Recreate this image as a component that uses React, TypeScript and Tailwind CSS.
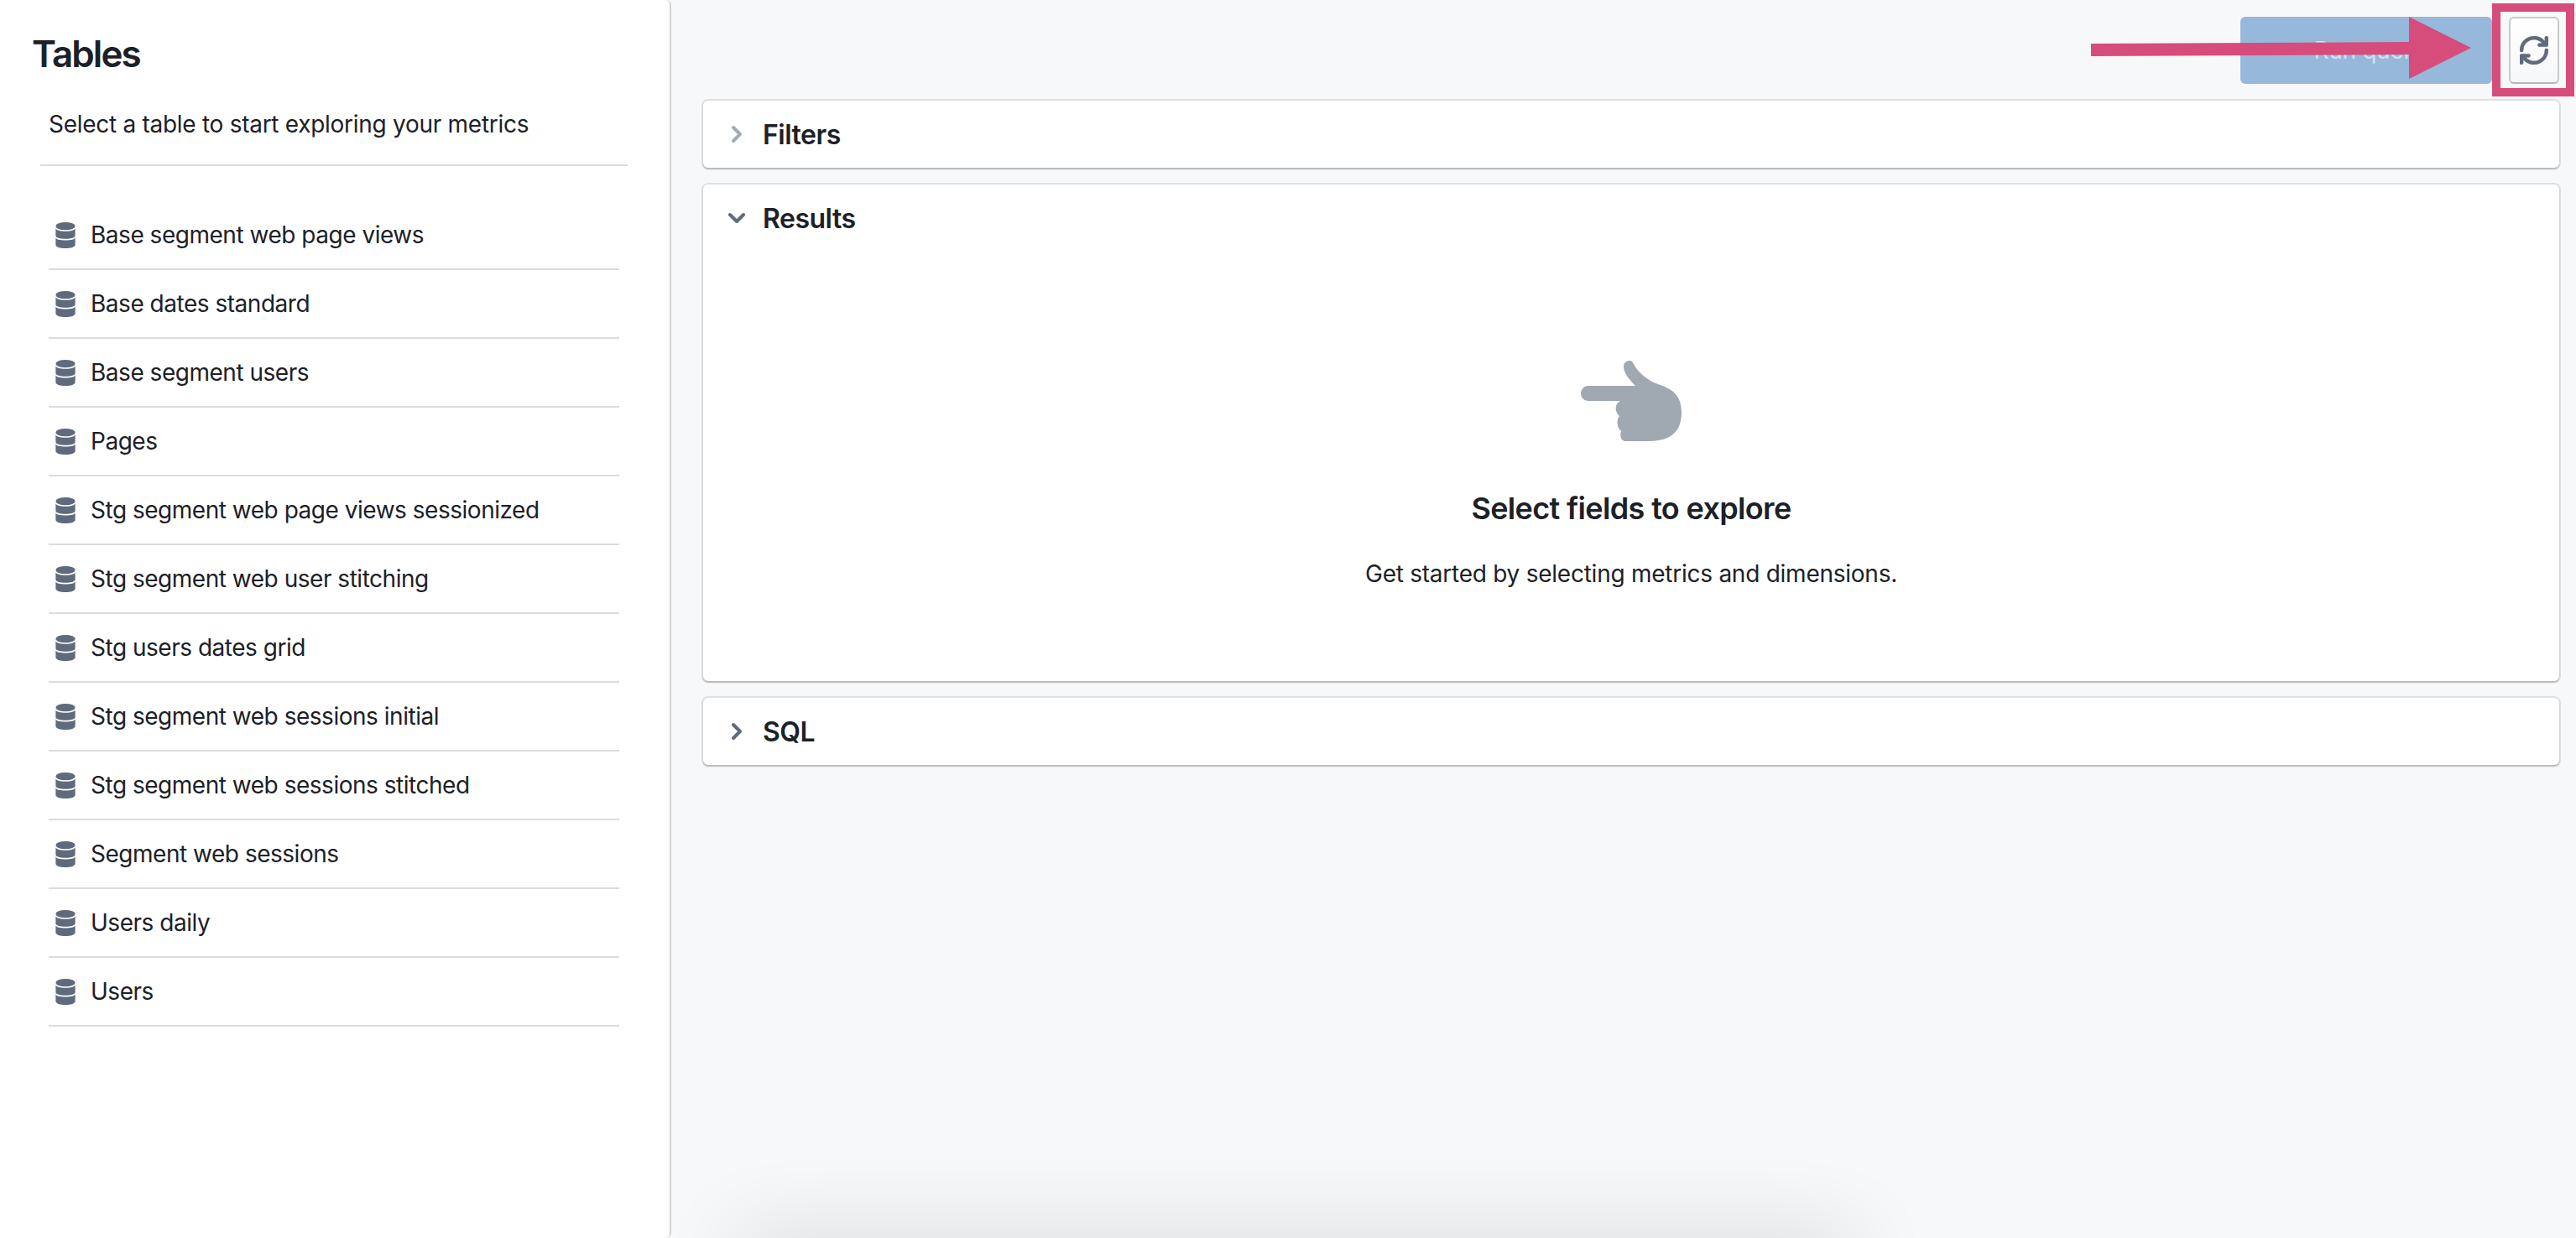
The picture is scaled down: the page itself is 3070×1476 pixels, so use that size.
const tables = [
  "Base segment web page views",
  "Base dates standard",
  "Base segment users",
  "Pages",
  "Stg segment web page views sessionized",
  "Stg segment web user stitching",
  "Stg users dates grid",
  "Stg segment web sessions initial",
  "Stg segment web sessions stitched",
  "Segment web sessions",
  "Users daily",
  "Users",
];

function DatabaseIcon() {
  return (
    <svg viewBox="0 0 24 32" className="w-6 h-[31px] shrink-0 text-[#5f6b7c]" fill="currentColor">
      <ellipse cx="12" cy="4.8" rx="12" ry="4.8" />
      <path d="M0 7C0 9.6 5.4 11.2 12 11.2S24 9.6 24 7V16.5C24 19 18.6 20.5 12 20.5S0 19 0 16.5Z" />
      <path d="M0 18.5C0 21 5.4 22.2 12 22.2S24 21 24 18.5V27.5C24 30.3 18.6 32 12 32S0 30.3 0 27.5Z" />
    </svg>
  );
}

function Chevron({ dir, color }: { dir: "right" | "down"; color: string }) {
  return (
    <svg viewBox="0 0 32 32" className="w-8 h-8 shrink-0" fill="none" stroke={color} strokeWidth="4" strokeLinecap="round" strokeLinejoin="round">
      {dir === "right" ? <polyline points="12,8 20,16 12,24" /> : <polyline points="8,12 16,20 24,12" />}
    </svg>
  );
}

function CardHeader({ title, dir, color }: { title: string; dir: "right" | "down"; color: string }) {
  return (
    <div className="flex items-center h-20 pl-6 gap-[15px]">
      <Chevron dir={dir} color={color} />
      <span className="pt-0.5 text-[32px] leading-10 font-semibold tracking-[-0.5px] text-[#1c2127]">{title}</span>
    </div>
  );
}

const cardShadow = "bg-white rounded-[6px] shadow-[0_0_0_2px_rgba(17,20,24,0.1),0_2px_2px_rgba(17,20,24,0.2)]";

export default function App() {
  return (
    <div className="relative flex w-full h-screen overflow-hidden bg-[#f7f8fa] font-['Inter',sans-serif] text-[#1c2127]">
      <aside className="w-[800px] h-full shrink-0 bg-white border-r-2 border-[#d3d4d8] rounded-r-[6px] z-10">
        <h3 className="pt-10 pl-[38px] text-[44px] leading-[48px] font-semibold tracking-[-1.9px]">Tables</h3>
        <p className="mt-[40px] pl-[58px] text-[28px] leading-10 tracking-[-0.28px]">Select a table to start exploring your metrics</p>
        <div className="mx-[48px] mt-[28px] w-[700px] h-0.5 bg-[#dcdcdd]" />
        <ul className="mt-[42px] ml-[58px] w-[680px]">
          {tables.map((t) => (
            <li key={t} className="flex items-center h-[82px] pl-2 gap-[18px] border-b-2 border-[#dcdcdd] text-[28px] tracking-[-0.48px]">
              <DatabaseIcon />
              <span>{t}</span>
            </li>
          ))}
        </ul>
      </aside>

      <main className="flex-1 min-w-0 pl-[38px] pr-5 pt-5">
        <div className="flex justify-end gap-5">
          <button className="w-[300px] h-20 pl-2 rounded-[6px] bg-[#96b8da] text-white/60 text-[28px] tracking-[-0.3px]">Run query</button>
          <button className="flex items-center justify-center w-[60px] h-20 rounded-[6px] bg-gradient-to-b from-white to-[#f6f7f9] border-2 border-[#c9cacc] border-b-[#b6b7b9]">
            <svg viewBox="0 0 16 16" className="w-[34px] h-[34px] text-[#5f6b7c]" fill="currentColor" stroke="currentColor" strokeWidth="0.12">
              <path d="M14.99 6.99c-.55 0-1 .45-1 1 0 3.31-2.69 6-6 6-1.77 0-3.36-.78-4.46-2h1.46c.55 0 1-.45 1-1s-.45-1-1-1h-4c-.55 0-1 .45-1 1v4c0 .55.45 1 1 1s1-.45 1-1v-1.73a7.97 7.97 0 006 2.73c4.42 0 8-3.58 8-8 0-.55-.45-1-1-1zm0-7c-.55 0-1 .45-1 1v1.73a7.97 7.97 0 00-6-2.73c-4.42 0-8 3.58-8 8 0 .55.45 1 1 1s1-.45 1-1c0-3.31 2.69-6 6-6 1.77 0 3.36.78 4.46 2h-1.46c-.55 0-1 .45-1 1s.45 1 1 1h4c.55 0 1-.45 1-1v-4c0-.55-.45-1-1-1z" />
            </svg>
          </button>
        </div>

        <section className={`mt-5 ${cardShadow}`}>
          <CardHeader title="Filters" dir="right" color="#a3abb5" />
        </section>

        <section className={`mt-5 h-[592px] ${cardShadow}`}>
          <CardHeader title="Results" dir="down" color="#5f6b7c" />
          <div className="flex flex-col items-center pt-[130px]">
            <svg viewBox="0 0 120 96" className="w-[120px] h-24" fill="#a0a8b2">
              <path d="M9 30H65C57 22 51 14 51 7C51 2 55 0 58 0C61 0 62 2 63 4C68 14 80 24 92 28C110 34 120 42 120 62C120 84 108 96 80 96H54C48 96 46 90 48 84C43 80 42 71 46 66C40 60 40 52 47 48H9C4 48 0 44 0 39C0 34 4 30 9 30Z" />
            </svg>
            <h4 className="mt-[56px] text-[36px] leading-[48px] font-semibold tracking-[-0.65px]">Select fields to explore</h4>
            <p className="mt-[34px] text-[28px] leading-10 tracking-[-0.25px]">Get started by selecting metrics and dimensions.</p>
          </div>
        </section>

        <section className={`mt-5 ${cardShadow}`}>
          <CardHeader title="SQL" dir="right" color="#5f6b7c" />
        </section>
      </main>

      {/* card peeking from below the fold: only its shadow is visible */}
      <div className="absolute left-[880px] top-[1480px] w-[1330px] h-10 shadow-[0_0_100px_rgba(0,0,0,0.2)]" />

      {/* annotation overlay */}
      <svg className="absolute left-[2492px] top-5 w-[453px] h-[74px] z-20" viewBox="0 0 453 74" fill="#d64c7a">
        <polygon points="0,32 379,30 379,0 453,37 379,74 379,45 0,47" />
      </svg>
      <div className="absolute left-[2970px] top-1 w-[98px] h-[111px] border-[10px] border-[#d64c7a] z-20" />
    </div>
  );
}
